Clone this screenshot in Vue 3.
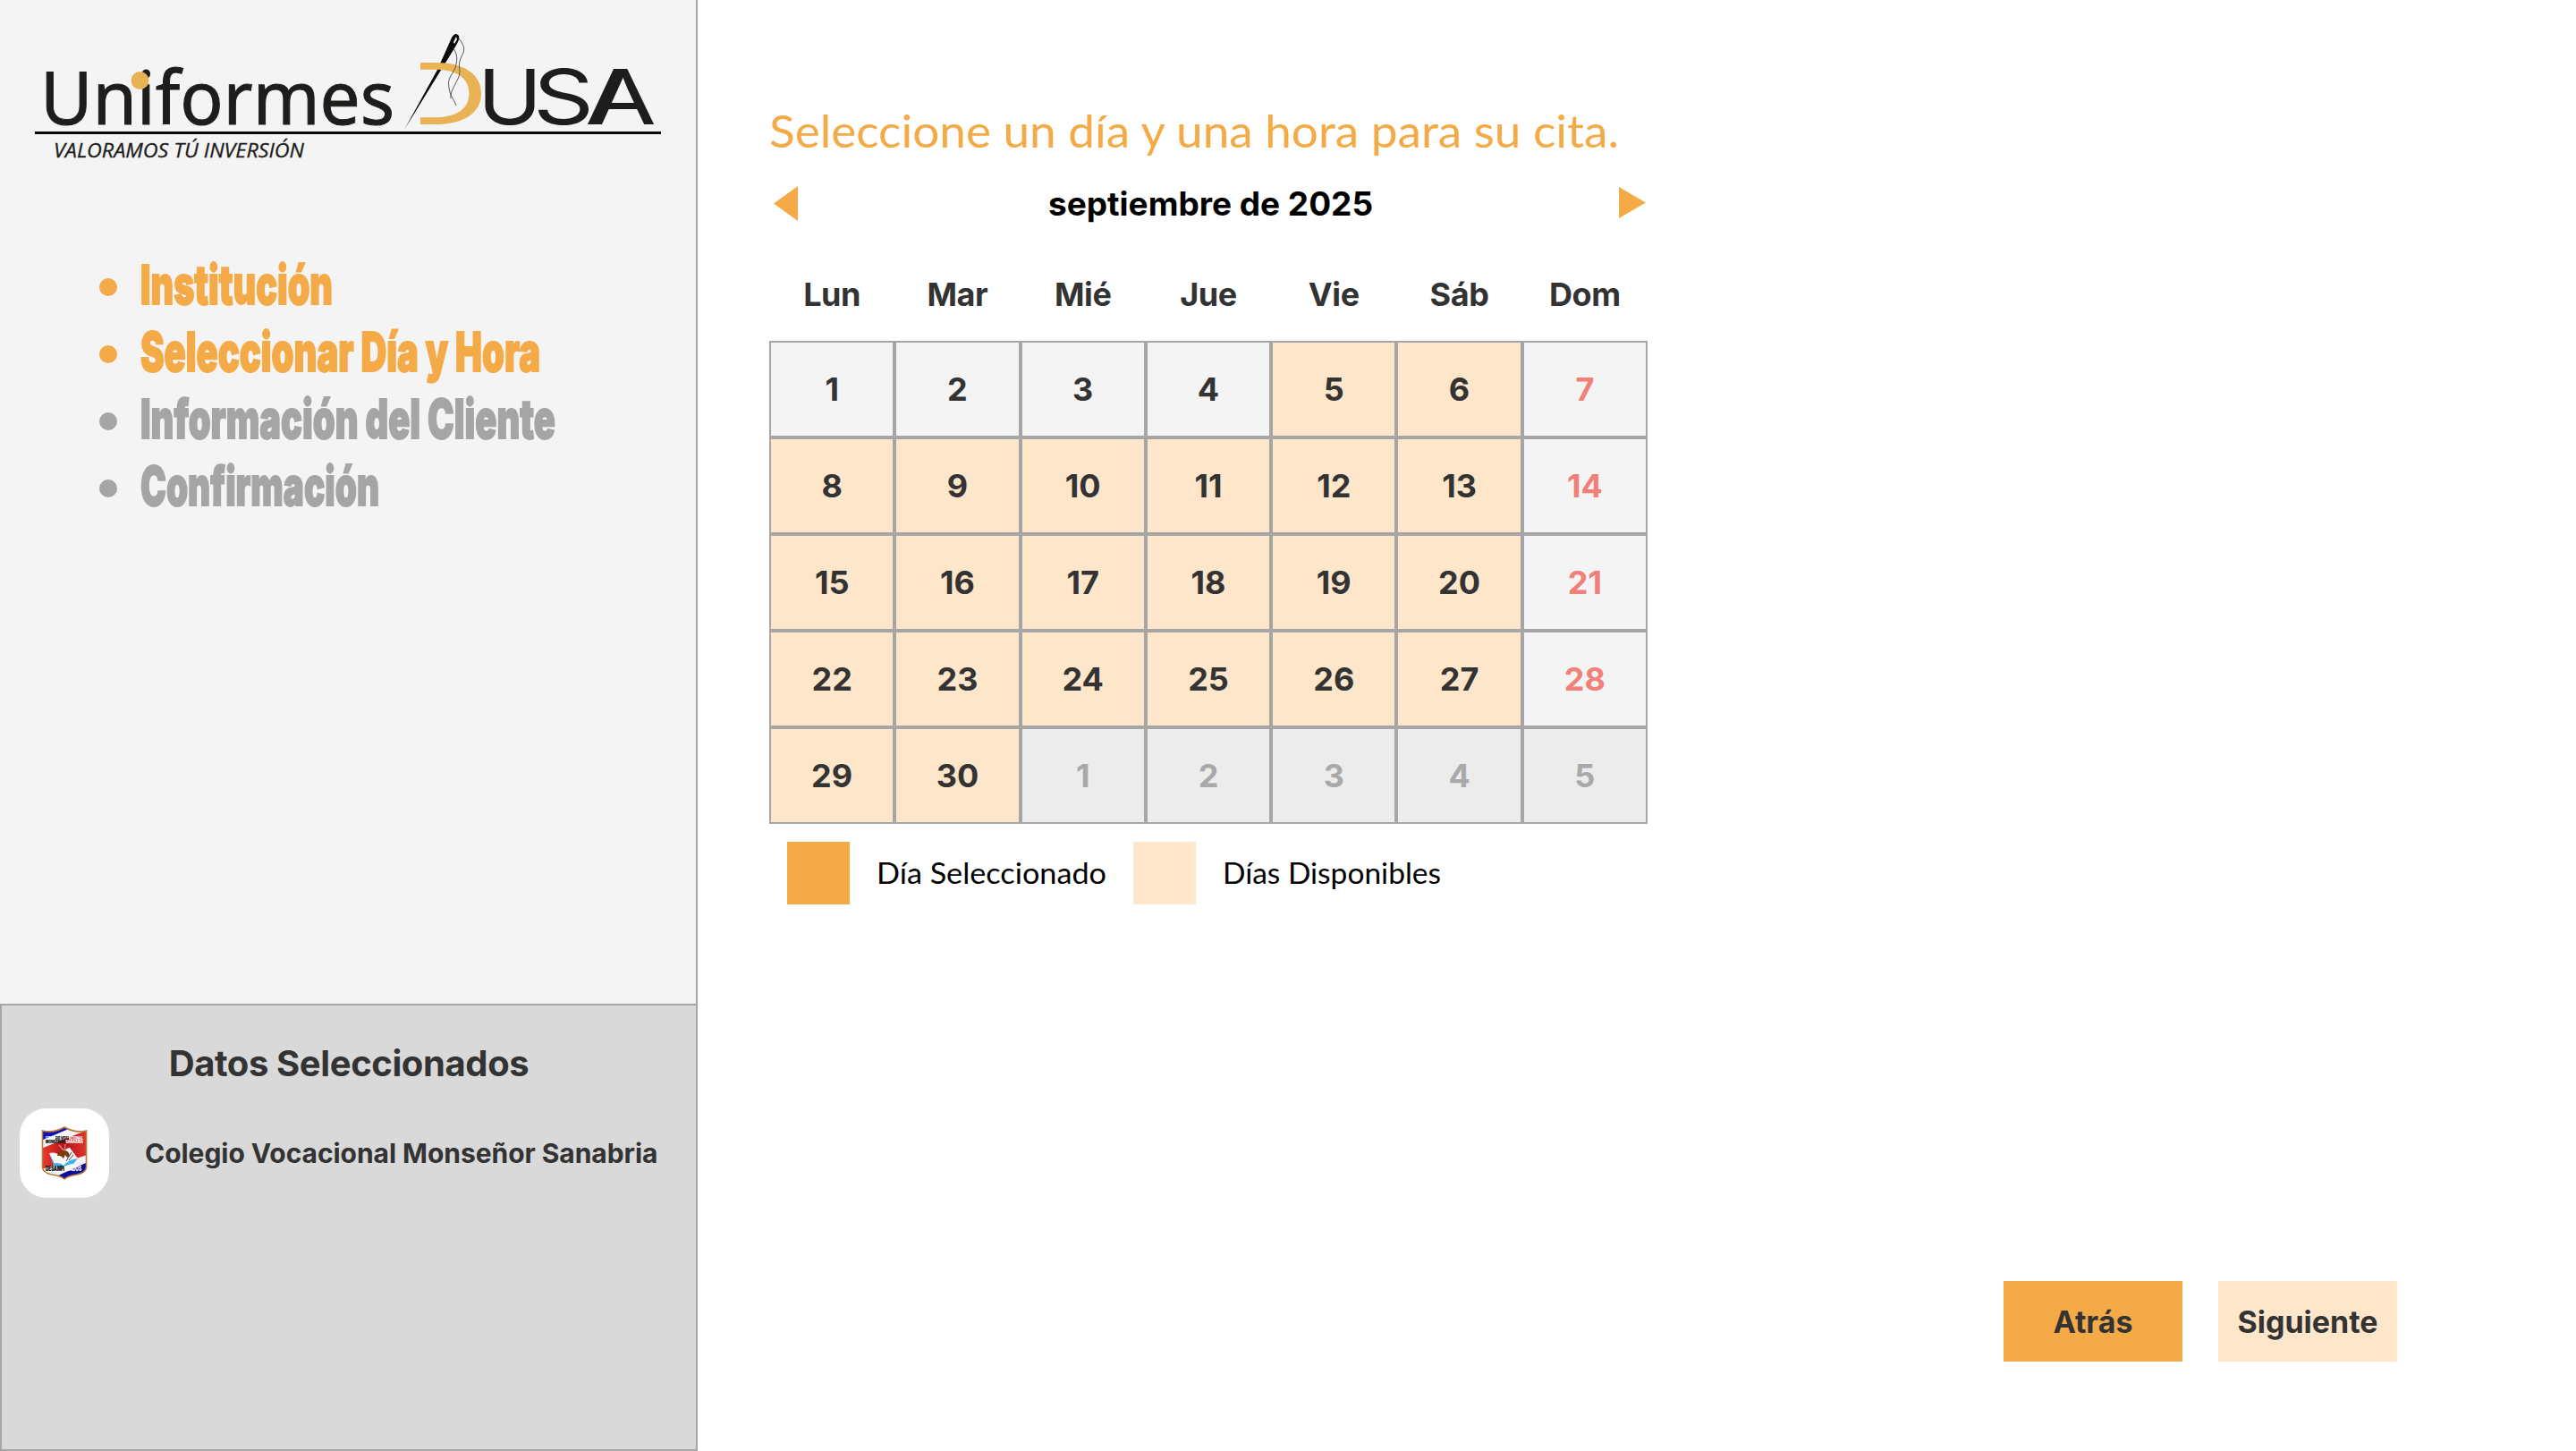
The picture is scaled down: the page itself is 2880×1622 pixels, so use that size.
<script setup>
import { h } from 'vue'

// One line of text set to an exact measure
const FitText = (p) =>
  h('svg', { width: p.w, height: p.h, style: { overflow: 'visible', display: 'block' } }, [
    h('text', { x: 0, y: p.base, textLength: p.w, lengthAdjust: 'spacingAndGlyphs', fill: 'currentColor' }, p.text),
  ])
FitText.props = ['text', 'w', 'h', 'base']

const steps = [
  { text: 'Institución', w: 215, done: true },
  { text: 'Seleccionar Día y Hora', w: 447, done: true },
  { text: 'Información del Cliente', w: 464, done: false },
  { text: 'Confirmación', w: 267, done: false },
]

const weekdays = ['Lun', 'Mar', 'Mié', 'Jue', 'Vie', 'Sáb', 'Dom']

const days = Array.from({ length: 35 }, (_, i) => {
  const n = i + 1
  if (n > 30) return { n: n - 30, kind: 'outside' }
  if (n % 7 === 0) return { n, kind: 'sunday' }
  return { n, kind: n < 5 ? 'past' : 'free' }
})
</script>

<template>
  <div class="page">
    <aside class="sidebar">
      <svg class="logo" width="778" height="200" viewBox="0 0 778 200">
        <defs>
          <clipPath id="openD"><rect x="470" y="60" width="80" height="90" /></clipPath>
        </defs>
        <text class="brand" x="45" y="139" textLength="396" lengthAdjust="spacingAndGlyphs">Uniformes</text>
        <circle cx="156.500" cy="90" r="10" fill="#e8b255" />
        <path d="M452 145 L489 78 L505 42 Q509 35 513 40 Q514 44 511 49 L492 80 Z" fill="#0a0a0a" />
        <path d="M507 47 L510 41 L511 44 L508 49 Z" fill="#f3f3f3" />
        <g clip-path="url(#openD)">
          <text class="brand-d" x="438" y="139" textLength="109" lengthAdjust="spacingAndGlyphs">D</text>
        </g>
        <path d="M513 43 C520 52 520 56 516 63 C510 75 517 78 512 88 C507 98 503 104 504 110" fill="none" stroke="#555" stroke-width="1" />
        <path d="M507 54 C511 61 512 65 509 76 C504 86 500 88 502 98 C503 107 507 110 510 118" fill="none" stroke="#555" stroke-width="1" />
        <text class="brand-usa" x="534" y="139" textLength="72" lengthAdjust="spacingAndGlyphs">U</text>
        <text class="brand-usa" x="596" y="139" textLength="68" lengthAdjust="spacingAndGlyphs">S</text>
        <text class="brand-usa" x="657" y="139" textLength="77" lengthAdjust="spacingAndGlyphs">A</text>
        <path d="M657 139 L686 77 L701 77 L673 139 Z" fill="#1d1d1b" />
        <rect x="39" y="147" width="700" height="3" fill="#0a0a0a" />
        <text class="tagline" x="60" y="175.500" textLength="280" lengthAdjust="spacingAndGlyphs">VALORAMOS TÚ INVERSIÓN</text>
      </svg>

      <ul class="steps">
        <li v-for="s in steps" :key="s.text" :class="{ done: s.done }">
          <span class="dot"></span>
          <FitText class="step-label" :text="s.text" :w="s.w" :h="75" :base="56" />
        </li>
      </ul>

      <section class="summary">
        <h2>Datos Seleccionados</h2>
        <div class="school">
          <div class="crest">
            <svg width="52" height="62" viewBox="0 0 52 62">
              <defs>
                <clipPath id="shield">
                  <path d="M1.500 6 Q14 9 26 2 Q38 9 50.500 6 V47 Q50 53 40 55 Q31 56 26 60 Q21 56 12 55 Q2 53 1.500 47 Z" />
                </clipPath>
                <linearGradient id="red" x1="0" x2="1">
                  <stop offset="0" stop-color="#f03a2e" />
                  <stop offset="0.500" stop-color="#b3161a" />
                  <stop offset="1" stop-color="#e5342c" />
                </linearGradient>
                <linearGradient id="inkTop">
                  <stop offset="0.250" stop-color="#fff" /><stop offset="0.250" stop-color="#111" />
                  <stop offset="0.620" stop-color="#111" /><stop offset="0.620" stop-color="#fff" />
                </linearGradient>
                <linearGradient id="inkHalf">
                  <stop offset="0.530" stop-color="#111" /><stop offset="0.530" stop-color="#fff" />
                </linearGradient>
              </defs>
              <g clip-path="url(#shield)">
                <rect width="52" height="62" fill="#f4f4f6" />
                <path d="M0 0 H40 L0 17 Z" fill="#1010b8" />
                <path d="M0 26 L52 5 V33 L0 49 Z" fill="url(#red)" />
                <path d="M6 62 L52 41 V62 Z" fill="#0c0c9c" />
              </g>
              <path d="M9 31 Q17 29 22 35 Q27 24 32 25 L41 37 Q30 38 25 45 Q18 41 14 43 Z" fill="#f8f8f8" />
              <path d="M9 31 L15 43 Q22 41 25 45 Q31 38 41 37 L36 43 Q29 43 25 48 Q20 46 14 45 Z" fill="#39b5ec" />
              <path d="M18 34 Q20 26 26 28 Q31 28 32 34 L29 36 L27 33 L25 37 L22 34 Z" fill="#7a3d10" />
              <path d="M20 22 L25 28 M27 21 L26 28" stroke="#d88" stroke-width="1.200" />
              <path d="M28 40 L34 30 M31 39 L36 33" stroke="#444" stroke-width="1" />
              <text x="5" y="15.500" class="crest-text" font-size="4.500" fill="url(#inkTop)" textLength="42" lengthAdjust="spacingAndGlyphs">COLEGIO VOCACIONAL</text>
              <text x="5" y="20" class="crest-text" font-size="4.500" fill="url(#inkHalf)" textLength="42" lengthAdjust="spacingAndGlyphs">MONSEÑOR SANABRIA</text>
              <text x="5" y="50.500" class="crest-text" font-size="7.500" fill="url(#inkHalf)" textLength="40" lengthAdjust="spacingAndGlyphs">DESAMPARADOS</text>
              <path d="M1.500 6 Q14 9 26 2 Q38 9 50.500 6 V47 Q50 53 40 55 Q31 56 26 60 Q21 56 12 55 Q2 53 1.500 47 Z" fill="none" stroke="#b87838" stroke-width="1.600" />
            </svg>
          </div>
          <span>Colegio Vocacional Monseñor Sanabria</span>
        </div>
      </section>
    </aside>

    <main class="content">
      <div class="picker">
        <FitText class="title" text="Seleccione un día y una hora para su cita." :w="950" :h="80" :base="57" />
        <div class="month">
          <svg width="27" height="39"><path d="M0 19.500 L27 0 V39 Z" fill="#f4aa47" /></svg>
          <span>septiembre de 2025</span>
          <svg class="forward" width="30" height="35"><path d="M30 17.500 L0 0 V35 Z" fill="#f4aa47" /></svg>
        </div>
        <div class="weekdays">
          <span v-for="w in weekdays" :key="w">{{ w }}</span>
        </div>
        <div class="grid">
          <div v-for="(d, i) in days" :key="i" class="day" :class="d.kind">{{ d.n }}</div>
        </div>
        <div class="legend">
          <span class="swatch selected"></span>
          <FitText class="legend-label" text="Día Seleccionado" :w="257" :h="70" :base="47" />
          <span class="swatch available"></span>
          <FitText class="legend-label" text="Días Disponibles" :w="244" :h="70" :base="47" />
        </div>
      </div>
      <div class="actions">
        <button class="back">Atrás</button>
        <button class="next">Siguiente</button>
      </div>
    </main>
  </div>
</template>

<style>
body { background: #fff; }
</style>

<style scoped>
.page {
  display: flex;
  width: 2880px;
  height: 1622px;
  overflow: hidden;
  font-family: Inter, sans-serif;
  color: #333;
}
.sidebar {
  display: flex;
  flex-direction: column;
  box-sizing: border-box;
  width: 780px;
  flex: none;
  background: #f4f4f4;
  border-right: 2px solid #a6a6a6;
}
.logo { display: block; flex: none; }
.brand { font: 400 83px "Noto Sans", sans-serif; fill: #1d1d1b; stroke: #1d1d1b; stroke-width: 1px; }
.brand-d { font: 400 95px Inter, sans-serif; fill: #e8b255; }
.brand-usa { font: 400 85px Inter, sans-serif; fill: #1d1d1b; }
.tagline { font: italic 400 21.500px "Open Sans", sans-serif; fill: #1d1d1b; stroke: #1d1d1b; stroke-width: 0.3px; }
.steps {
  list-style: none;
  margin: 84px 0 0;
  padding: 0 0 0 111px;
}
.steps li {
  display: flex;
  align-items: center;
  gap: 26px;
  height: 75px;
  color: #a5a5a5;
}
.steps li.done { color: #f4aa47; }
.dot { width: 20px; height: 20px; margin-top: -1px; border-radius: 50%; background: currentColor; }
.step-label { font: 900 60px Inter, sans-serif; stroke: currentColor; stroke-width: 1.8px; }
.summary {
  box-sizing: border-box;
  height: 500px;
  margin-top: auto;
  background: #d9d9d9;
  border: 2px solid #a6a6a6;
  border-right: 0;
}
.summary h2 {
  margin: 41px 0 26px;
  font-size: 40px;
  line-height: 48px;
  font-weight: 700;
  letter-spacing: -0.4px;
  text-align: center;
}
.school {
  display: flex;
  align-items: center;
  gap: 40px;
  padding-left: 20px;
  font-size: 30px;
  font-weight: 700;
  letter-spacing: -0.05px;
  white-space: nowrap;
}
.crest {
  display: flex;
  align-items: center;
  justify-content: center;
  width: 100px;
  height: 100px;
  border-radius: 30px;
  background: #fff;
}
.crest-text { font-family: Inter, sans-serif; font-weight: 900; }
.content {
  flex: 1;
  display: flex;
  flex-direction: column;
  justify-content: space-between;
  padding: 108px 200px 100px 80px;
}
.picker { width: 982px; }
.title { font: 400 51px Lato, sans-serif; color: #f4aa47; }
.month {
  display: flex;
  align-items: center;
  justify-content: space-between;
  height: 78px;
  padding: 0 2px 0 5px;
  color: #000;
  font-size: 37px;
  font-weight: 700;
}
.month span { padding-left: 5px; }
.forward { margin-top: -2px; }
.weekdays {
  display: grid;
  grid-template-columns: repeat(7, 1fr);
  height: 115px;
  line-height: 126px;
  text-align: center;
  font-size: 36px;
  font-weight: 700;
  letter-spacing: -0.4px;
}
.grid { display: grid; grid-template-columns: repeat(7, 1fr); }
.day {
  display: flex;
  align-items: center;
  justify-content: center;
  box-sizing: border-box;
  height: 108px;
  border: 2px solid #a6a6a6;
  background: #f4f4f4;
  font-size: 36px;
  font-weight: 700;
}
.day.free { background: #fde6ca; }
.day.sunday { color: #f08078; }
.day.outside { background: #ececec; color: #a9a9a9; }
.legend {
  display: flex;
  align-items: center;
  gap: 30px;
  padding: 20px 0 0 20px;
}
.swatch { width: 70px; height: 70px; }
.selected { background: #f4aa47; }
.available { background: #fde6ca; }
.legend-label { font: 400 32px Lato, sans-serif; color: #000; }
.actions { display: flex; justify-content: flex-end; gap: 40px; }
.actions button {
  width: 200px;
  height: 90px;
  padding: 0;
  border: 0;
  font: 700 34px Inter, sans-serif;
  color: #333;
}
.back { background: #f4aa47; }
.next { background: #fde6ca; }
</style>
